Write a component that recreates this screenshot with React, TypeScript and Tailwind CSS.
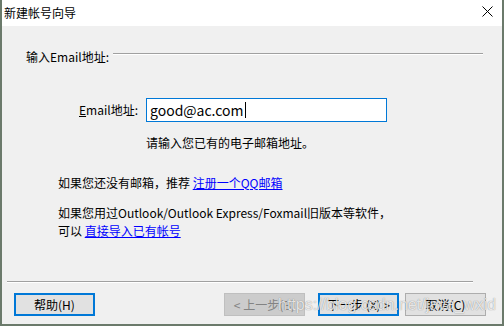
import React from 'react';

const font = { fontFamily: '"Noto Sans CJK SC", "Noto Sans", sans-serif' };

interface BtnProps {
  label: React.ReactNode;
  focused?: boolean;
  disabled?: boolean;
}

const WinButton: React.FC<BtnProps> = ({ label, focused, disabled }) => {
  let cls = 'border border-[#adadad] bg-[#e1e1e1] text-black';
  if (focused) cls = 'border-2 border-[#0078d7] bg-[#e1e1e1] text-black';
  if (disabled) cls = 'border border-[#bfbfbf] bg-[#cccccc] text-[#838383]';
  return (
    <button className={`w-[81px] h-[23px] flex items-center justify-center text-[12px] leading-none whitespace-pre ${cls}`}>
      {label}
    </button>
  );
};

export default function App() {
  return (
    <div
      className="relative w-[504px] h-[326px] flex flex-col border-x-2 border-b-2 border-[#6b7a6b] text-black overflow-hidden"
      style={font}
    >
      {/* Title bar */}
      <div className="h-[26px] bg-white flex items-center justify-between pl-[2px] pr-[9px] shrink-0">
        <span className="text-[12px] leading-none">新建帐号向导</span>
        <svg width="11" height="11" viewBox="0 0 11 11" className="mt-[-3px]">
          <path d="M0.5 0.5 L10.5 10.5 M10.5 0.5 L0.5 10.5" stroke="#000" strokeWidth="1" fill="none" />
        </svg>
      </div>

      {/* Body */}
      <div className="flex-1 bg-[#f0f0f0] flex flex-col">
        {/* Group header */}
        <div className="mt-[23px] h-[16px] flex items-center pl-[24px] pr-[19px]">
          <span className="text-[12px] leading-[16px] whitespace-nowrap">输入Email地址:</span>
          <div className="flex-1 ml-[4px] mt-[-7px] border-t border-[#a0a0a0] border-b border-b-white" />
        </div>

        {/* Email row */}
        <div className="mt-[33px] flex items-center pl-[77px]">
          <span className="w-[67px] text-[12px] leading-none whitespace-nowrap">
            <span className="underline">E</span>mail地址:
          </span>
          <div className="w-[241px] h-[24px] bg-white border border-[#0078d7] flex items-center pl-[3px]">
            <span className="text-[14px] leading-none">good@ac.com</span>
            <span className="w-px h-[16px] bg-black ml-px" />
          </div>
        </div>

        {/* Hint */}
        <div className="mt-[13px] pl-[144px] text-[12px] leading-[16px]">请输入您已有的电子邮箱地址。</div>

        {/* Paragraphs */}
        <div className="mt-[23px] pl-[56px] text-[12px] leading-[18px]">
          如果您还没有邮箱，推荐 <span className="text-[#0000ff] underline">注册一个QQ邮箱</span>
        </div>
        <div className="mt-[12px] pl-[56px] text-[12px] leading-[18px]">
          <div>如果您用过Outlook/Outlook Express/Foxmail旧版本等软件，</div>
          <div>
            可以 <span className="text-[#0000ff] underline">直接导入已有帐号</span>
          </div>
        </div>

        {/* Separator */}
        <div className="mt-auto ml-[5px] w-[466px] border-t border-[#a0a0a0] border-b border-b-white" />

        {/* Buttons */}
        <div className="mt-[10px] mb-[8px] flex items-center pl-[12px] pr-[16px]">
          <WinButton label="帮助(H)" focused />
          <div className="flex-1" />
          <WinButton label="< 上一步(B)" disabled />
          <div className="w-[13px]" />
          <WinButton label="下一步 (X) >" focused />
          <div className="w-[6px]" />
          <WinButton label="取消(C)" />
        </div>
      </div>

      {/* Watermark overlay */}
      <div
        className="absolute left-[276px] top-[295px] text-[16px] leading-[20px] text-white/80 pointer-events-none whitespace-nowrap [text-shadow:0_0_1px_rgba(0,0,0,0.5)]"
        style={{ fontFamily: '"Liberation Sans", Arial, sans-serif' }}
      >
        https://blog.csdn.net/java_wxid
      </div>
    </div>
  );
}
